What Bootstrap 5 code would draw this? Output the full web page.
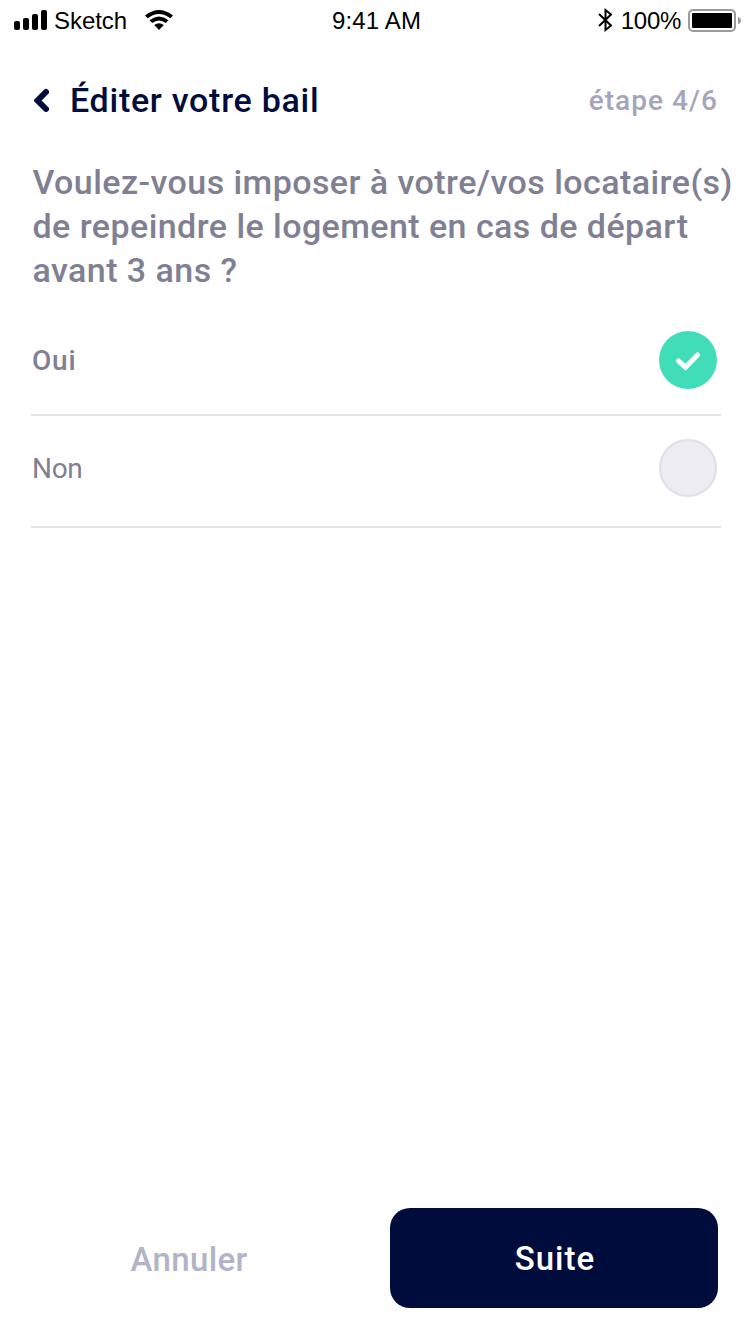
<!DOCTYPE html>
<html lang="fr">
<head>
<meta charset="utf-8">
<meta name="viewport" content="width=device-width, initial-scale=1">
<title>Éditer votre bail</title>
<link rel="stylesheet" href="https://cdn.jsdelivr.net/npm/bootstrap@5.3.0/dist/css/bootstrap.min.css">
<style>
  body { font-family: Roboto, "Noto Sans", sans-serif; color: #7f8093; background: #fff; }
  .screen { height: 1340px; width: 750px; overflow: hidden; }
  .status-bar { height: 40px; padding: 0 9px 0 14px; font: 24px/38px "Liberation Sans", Arial, sans-serif; color: #000; }
  .status-bar span { padding-top: 2px; }
  .status-side { width: 280px; }
  .status-net { margin-left: 6px; letter-spacing: -.05px; }
  .status-time { letter-spacing: .15px; margin-right: 2px; }
  .status-pct { margin: 0 7px 0 9px; letter-spacing: -.3px; }
  .wifi { margin-left: 17px; }
  .top-bar { height: 60px; margin-top: 30px; padding: 0 32px 0 34px; }
  .top-title { font-size: 34px; font-weight: 500; line-height: 60px; letter-spacing: .72px; color: #000c3b; margin-left: 21px; }
  .step { font-size: 28px; font-weight: 500; letter-spacing: 1.05px; color: #a5a5ba; padding-top: 2px; }
  .question { font-size: 34px; font-weight: 500; line-height: 44px; letter-spacing: .44px; margin: 30px 0 0 32.5px; }
  .choices { margin: 26px 29px 0 31px; }
  .choice { border-bottom: 2px solid #e3e3e9; padding: 0 4px 0 1px; font-size: 28px; }
  .choice-yes { height: 98px; padding-bottom: 10px; font-weight: 500; letter-spacing: .8px; }
  .choice-yes .dot { margin-top: -2px; }
  .choice-no { height: 112px; padding-bottom: 6px; letter-spacing: -.3px; }
  .choice-no .choice-label { padding-top: 1px; }
  .dot { width: 58px; height: 58px; }
  .dot-on { background: #41ddb8; }
  .dot-off { background: #ededf3; border: 2px solid #dfdfe6; }
  .actions { padding: 0 32px 32px 32px; }
  .actions .btn { height: 100px; font-size: 33px; font-weight: 500; border: 0; border-radius: 20px; padding-top: 8px; }
  .actions .btn-cancel { width: 314px; color: #b0b4c6; letter-spacing: .35px; padding-top: 10px; }
  .actions .btn-next, .actions .btn-next:hover { width: 328px; color: #fff; background: #000c3b; letter-spacing: 1px; padding-left: 14px; }
</style>
</head>
<body>
<main class="screen d-flex flex-column">
  <div class="status-bar d-flex justify-content-between align-items-center">
    <div class="status-side d-flex align-items-center">
      <svg width="34" height="40" viewBox="0 0 34 40"><rect y="21" width="6" height="9" rx="2"/><rect x="9" y="18" width="6" height="12" rx="2"/><rect x="18" y="14" width="6" height="16" rx="2"/><rect x="27" y="10" width="6" height="20" rx="2"/></svg>
      <span class="status-net">Sketch</span>
      <svg class="wifi" width="30" height="40" viewBox="0 0 30 40"><path d="M1 15.500Q15 4.500 29 15.500L26.300 18.300Q15 9.500 3.700 18.300ZM5.500 20.200Q15 12.800 24.500 20.200L21.800 23Q15 18 8.200 23ZM10.200 25Q15 21.500 19.800 25L15 30Z"/></svg>
    </div>
    <span class="status-time">9:41 AM</span>
    <div class="status-side d-flex align-items-center justify-content-end">
      <svg class="bt" width="14" height="40" viewBox="0 0 14 40"><path d="M1 14L13 25.500 7.500 30V10L13 14.500 1 26" fill="none" stroke="#000" stroke-width="2"/></svg>
      <span class="status-pct">100%</span>
      <svg class="batt" width="53" height="40" viewBox="0 0 53 40"><rect x="1" y="10" width="46" height="21" rx="4" fill="none" stroke="#9b9b9b" stroke-width="2"/><rect x="4" y="13" width="40" height="15" rx="1"/><path d="M50 17Q53 18 53 20.500T50 24.500Z" fill="#9b9b9b"/></svg>
    </div>
  </div>
  <header class="top-bar d-flex align-items-center">
    <svg width="15" height="24" viewBox="0 0 15 24"><path d="M12 4L3.500 12.500 12 21" fill="none" stroke="#000c3b" stroke-width="6" stroke-linecap="round"/></svg>
    <h1 class="top-title mb-0">Éditer votre bail</h1>
    <span class="step ms-auto">étape 4/6</span>
  </header>
  <p class="question mb-0 text-nowrap"><span>Voulez-vous imposer à votre/vos locataire(s)</span><br><span>de repeindre le logement en cas de départ</span><br><span>avant 3 ans ?</span></p>
  <div class="choices">
    <div class="choice choice-yes d-flex align-items-center justify-content-between"><span class="choice-label">Oui</span>
      <span class="dot dot-on rounded-circle d-flex"><svg width="58" height="58" viewBox="0 0 58 58"><path d="M19.500 30L26.500 36.200 38.500 24" fill="none" stroke="#fff" stroke-width="5" stroke-linecap="round"/></svg></span>
    </div>
    <div class="choice choice-no d-flex align-items-center justify-content-between"><span class="choice-label">Non</span><span class="dot dot-off rounded-circle"></span></div>
  </div>
  <footer class="actions d-flex mt-auto justify-content-between">
    <button type="button" class="btn btn-cancel">Annuler</button>
    <button type="button" class="btn btn-next">Suite</button>
  </footer>
</main>
<script src="https://cdn.jsdelivr.net/npm/bootstrap@5.3.0/dist/js/bootstrap.bundle.min.js"></script>
</body>
</html>
